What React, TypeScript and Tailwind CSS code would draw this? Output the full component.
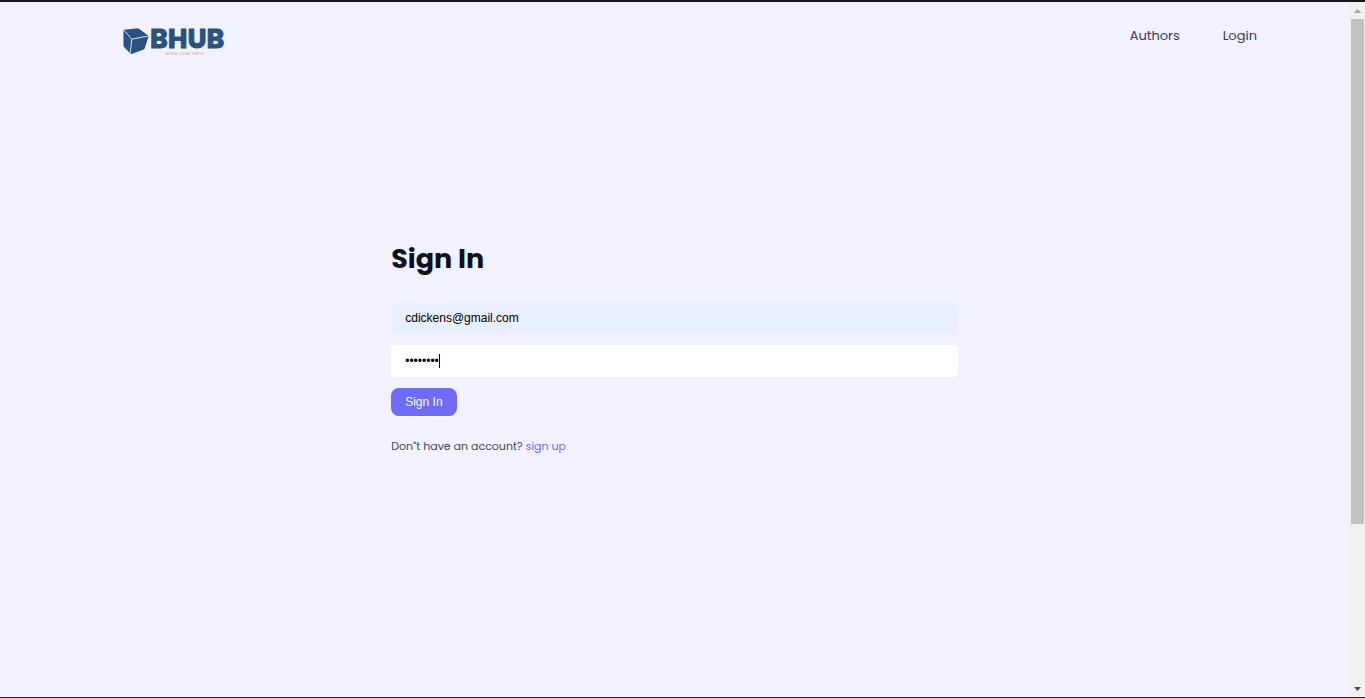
import { useState } from "react";

function Logo() {
  return (
    <a href="#home" aria-label="BHUB home" className="block">
      <svg width="116" height="34" viewBox="0 0 116 34" role="img" aria-label="BHUB, where ideas thrive" className="overflow-visible">
        <path d="M1.4 4.8 Q1.4 4 2.2 3.8 L15.2 2.3 Q16.2 2.2 17 2.7 L25.8 9.2 Q26.6 9.9 26.4 10.8 L22.8 22.2 Q22.5 23.2 21.6 23.6 L10.4 27.8 Q9.2 28.2 8.4 27.4 L2.2 21.2 Q1.5 20.5 1.5 19.5 Z" fill="#2a527f" />
        <path d="M1.8 4.2 L9.8 13.2 L26.2 10 M9.8 13.2 L8.2 27.4" fill="none" stroke="#d5dced" strokeWidth="1" />
        <text x="28" y="22" fontFamily="Poppins, Inter, sans-serif" fontSize="27" fontWeight="700" fill="#2a527f" stroke="#2a527f" strokeWidth="0.9">
          BHUB
        </text>
        <text x="43" y="29" fontFamily="Poppins, sans-serif" fontSize="4" fill="#dfa98e">
          WHERE IDEAS THRIVE
        </text>
      </svg>
    </a>
  );
}

function Header() {
  return (
    <header className="flex items-start justify-between pt-6 pr-[92px] pl-[122px]">
      <Logo />
      <nav className="flex gap-[43px] text-[13px] leading-5 text-[#3b3a56]">
        <a href="#authors">Authors</a>
        <a href="#login">Login</a>
      </nav>
    </header>
  );
}

function SignInForm() {
  const [email, setEmail] = useState("cdickens@gmail.com");
  const [password, setPassword] = useState("dickens1");
  return (
    <section className="mx-auto mt-[179px] w-[42%]">
      <h1 className="text-[27px] leading-10 font-bold text-[#0f0f23]">Sign In</h1>
      <form className="mt-6 flex flex-col items-start gap-[11px] font-['Liberation_Sans',Arial,sans-serif] text-xs" onSubmit={(e) => e.preventDefault()}>
        <input
          type="email"
          aria-label="Email"
          value={email}
          onChange={(e) => setEmail(e.target.value)}
          className="h-[31px] w-full rounded-[4px] bg-[#e8f0fe] px-[14px] pb-px text-black outline-none"
        />
        <div className="relative w-full">
          <input
            type="password"
            aria-label="Password"
            value={password}
            onChange={(e) => setPassword(e.target.value)}
            className="block h-8 w-full rounded-[4px] bg-white px-[14px] text-black outline-none"
          />
          <span className="absolute top-[9px] left-12 h-[14px] w-px bg-black" />
        </div>
        <button type="submit" className="h-7 rounded-lg bg-[#6f6af8] px-[14px] text-white">
          Sign In
        </button>
      </form>
      <p className="mt-5 text-[11px] leading-5 text-[#484660]">
        Don"t have an account?{" "}
        <a href="#signup" className="text-[#6f6af8]">
          sign up
        </a>
      </p>
    </section>
  );
}

function ScrollRail() {
  return (
    <div aria-hidden="true" className="flex w-4 shrink-0 flex-col items-center bg-[#f0f0f0] pr-px pl-0.5">
      <div className="flex h-[17px] items-center">
        <svg width="7" height="4" viewBox="0 0 7 4">
          <path d="M0 4 L3.5 0 L7 4 Z" fill="#a3a3a3" />
        </svg>
      </div>
      <div className="flex w-full flex-1 flex-col">
        <div className="h-[76.4%] bg-[#c1c1c1]" />
      </div>
      <div className="flex h-[17px] items-center">
        <svg width="7" height="4" viewBox="0 0 7 4">
          <path d="M0 0 L3.5 4 L7 0 Z" fill="#505050" />
        </svg>
      </div>
    </div>
  );
}

export default function App() {
  return (
    <div className="flex min-h-screen border-t-2 border-b border-t-[#17171b] border-b-[#23272f] bg-[#f2f2ff] font-[Poppins,Inter,sans-serif]">
      <main className="min-w-0 flex-1">
        <Header />
        <SignInForm />
      </main>
      <ScrollRail />
    </div>
  );
}
